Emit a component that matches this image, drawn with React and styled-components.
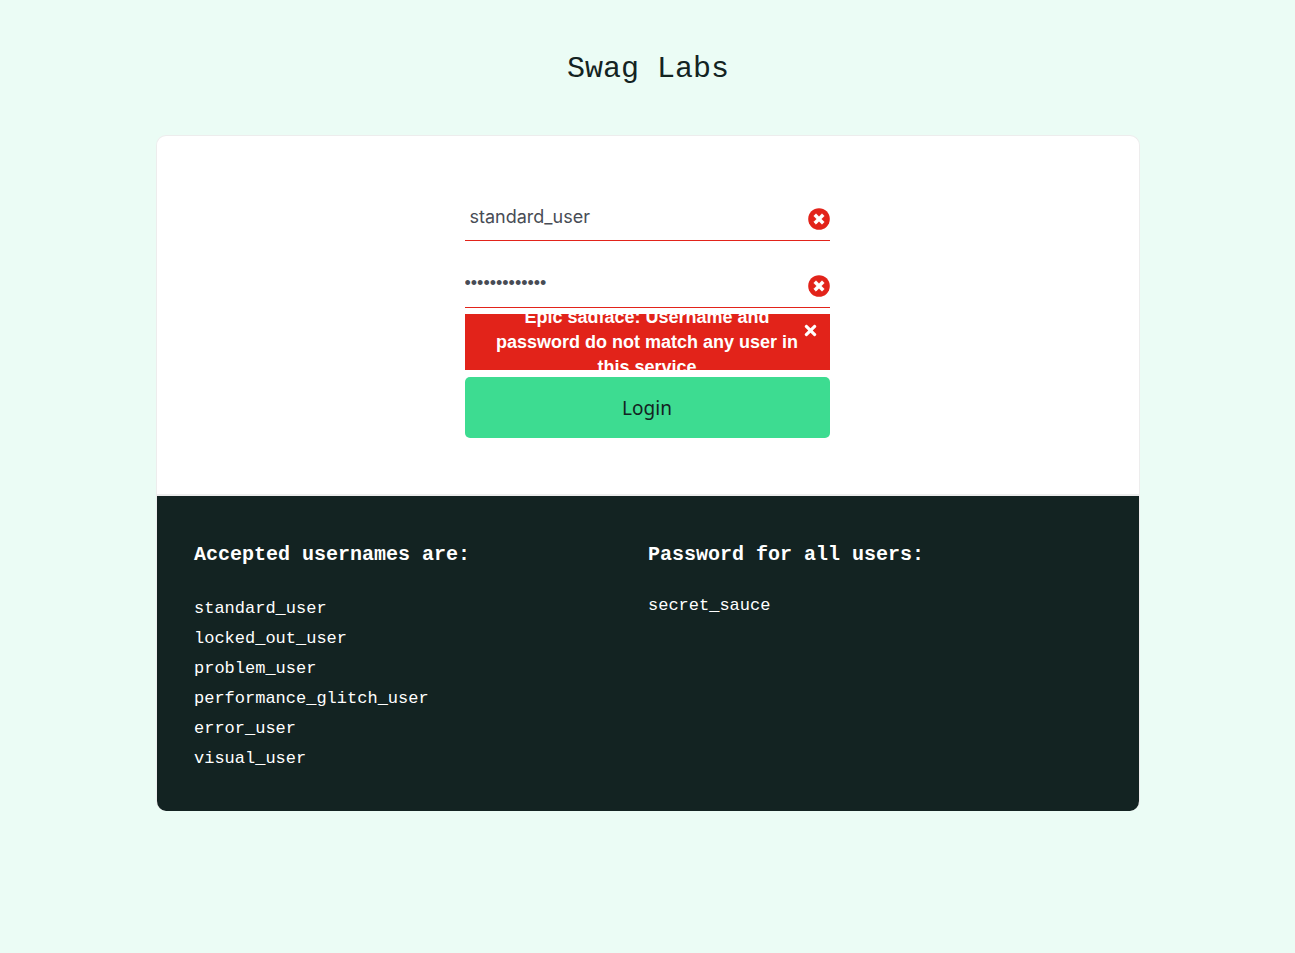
import React from "react";
import styled, { createGlobalStyle } from "styled-components";
import { FaTimes } from "react-icons/fa";

const sans = '"Inter", "Liberation Sans", sans-serif';
const mono = '"Liberation Mono", monospace';

const GlobalStyle = createGlobalStyle`
  *, *::before, *::after { box-sizing: border-box; }
  body {
    margin: 0;
    background: #ebfcf5;
    color: #132322;
    font-family: ${sans};
  }
`;

const Page = styled.main`
  padding: 49px 155px 142px 156px;

  @media (max-width: 800px) {
    padding: 24px 16px;
  }
`;

const Title = styled.h1`
  margin: 0 0 46px;
  font: 400 30px/40px ${mono};
  text-align: center;
`;

const Card = styled.div`
  overflow: hidden;
  border: 1px solid #ededed;
  border-bottom: 0;
  border-radius: 10px;
  background: #fff;
`;

const LoginArea = styled.section`
  padding: 55px 18px 56px 16px;
  border-bottom: 2px solid #ededed;
`;

const Form = styled.form`
  display: flex;
  flex-direction: column;
  max-width: 365px;
  margin: 0 auto;
`;

const Field = styled.div`
  display: flex;
  align-items: center;
  height: 50px;
  margin-bottom: ${(p) => (p.$last ? 6 : 17)}px;
  border-bottom: 1px solid #e2231a;
`;

const Badge = styled.svg`
  flex: none;
  width: 22px;
  height: 22px;
  margin-top: 6px;
`;

const Input = styled.input`
  flex: 1;
  min-width: 0;
  height: 49px;
  padding: 2px 0 0 ${(p) => (p.type === "password" ? 0 : 5)}px;
  border: 0;
  outline: 0;
  background: transparent;
  color: #484c55;
  font: 400 18px/24px ${(p) => (p.type === "password" ? '"Liberation Sans", sans-serif' : sans)};
`;

const ErrorMessage = styled.div`
  display: flex;
  height: 56px;
  overflow: hidden;
  align-items: center;
  padding: 0 13px 0 25px;
  background: #e2231a;
  color: #fff;
`;

const ErrorText = styled.h3`
  flex: 1;
  margin: 0;
  font: 700 18px/25px "Liberation Sans", sans-serif;
  text-align: center;
`;

const CloseButton = styled.button`
  display: flex;
  justify-content: center;
  align-self: flex-start;
  width: 12px;
  margin-top: 8px;
  padding: 0;
  border: 0;
  background: none;
  color: #fff;
  cursor: pointer;

  svg {
    flex: none;
  }
`;

const LoginButton = styled.button`
  height: 61px;
  margin-top: 7px;
  border: 0;
  border-radius: 5px;
  background: #3ddc91;
  color: #132322;
  font: 400 19px/28px "Noto Sans", sans-serif;
  cursor: pointer;
`;

const Credentials = styled.section`
  display: grid;
  grid-template-columns: repeat(auto-fit, minmax(300px, 1fr));
  padding: 44px 37px 37px;
  background: #132322;
  color: #fff;
`;

const Heading = styled.h4`
  margin: 0 0 24px;
  font: 700 20px/30px ${mono};
`;

const Entries = styled.ul`
  margin: 0;
  padding: 0;
  list-style: none;
  font: 400 17px/30px ${mono};
`;

const Password = styled.p`
  margin: -3px 0 0;
  font: 400 17px/30px ${mono};
`;

const usernames = [
  "standard_user",
  "locked_out_user",
  "problem_user",
  "performance_glitch_user",
  "error_user",
  "visual_user",
];

function InvalidBadge() {
  return (
    <Badge viewBox="0 0 22 22" aria-hidden="true">
      <circle cx="11" cy="11" r="10.8" fill="#e2231a" />
      <path
        d="M8 5.8 11 8.8 14 5.8 16.2 8 13.2 11 16.2 14 14 16.2 11 13.2 8 16.2 5.8 14 8.8 11 5.8 8Z"
        fill="#fff"
        stroke="#fff"
        strokeWidth="0.7"
        strokeLinejoin="round"
      />
    </Badge>
  );
}

export default function App() {
  return (
    <>
      <GlobalStyle />
      <Page>
        <Title>Swag Labs</Title>
        <Card>
          <LoginArea>
            <Form onSubmit={(e) => e.preventDefault()}>
              <Field>
                <Input type="text" aria-label="Username" defaultValue="standard_user" />
                <InvalidBadge />
              </Field>
              <Field $last>
                <Input type="password" aria-label="Password" defaultValue="wrongpassword" />
                <InvalidBadge />
              </Field>
              <ErrorMessage role="alert">
                <ErrorText>
                  Epic sadface: Username and password do not match any user in this service
                </ErrorText>
                <CloseButton type="button" aria-label="Dismiss error">
                  <FaTimes size={17} />
                </CloseButton>
              </ErrorMessage>
              <LoginButton type="submit">Login</LoginButton>
            </Form>
          </LoginArea>
          <Credentials>
            <div>
              <Heading>Accepted usernames are:</Heading>
              <Entries>
                {usernames.map((name) => (
                  <li key={name}>{name}</li>
                ))}
              </Entries>
            </div>
            <div>
              <Heading>Password for all users:</Heading>
              <Password>secret_sauce</Password>
            </div>
          </Credentials>
        </Card>
      </Page>
    </>
  );
}
